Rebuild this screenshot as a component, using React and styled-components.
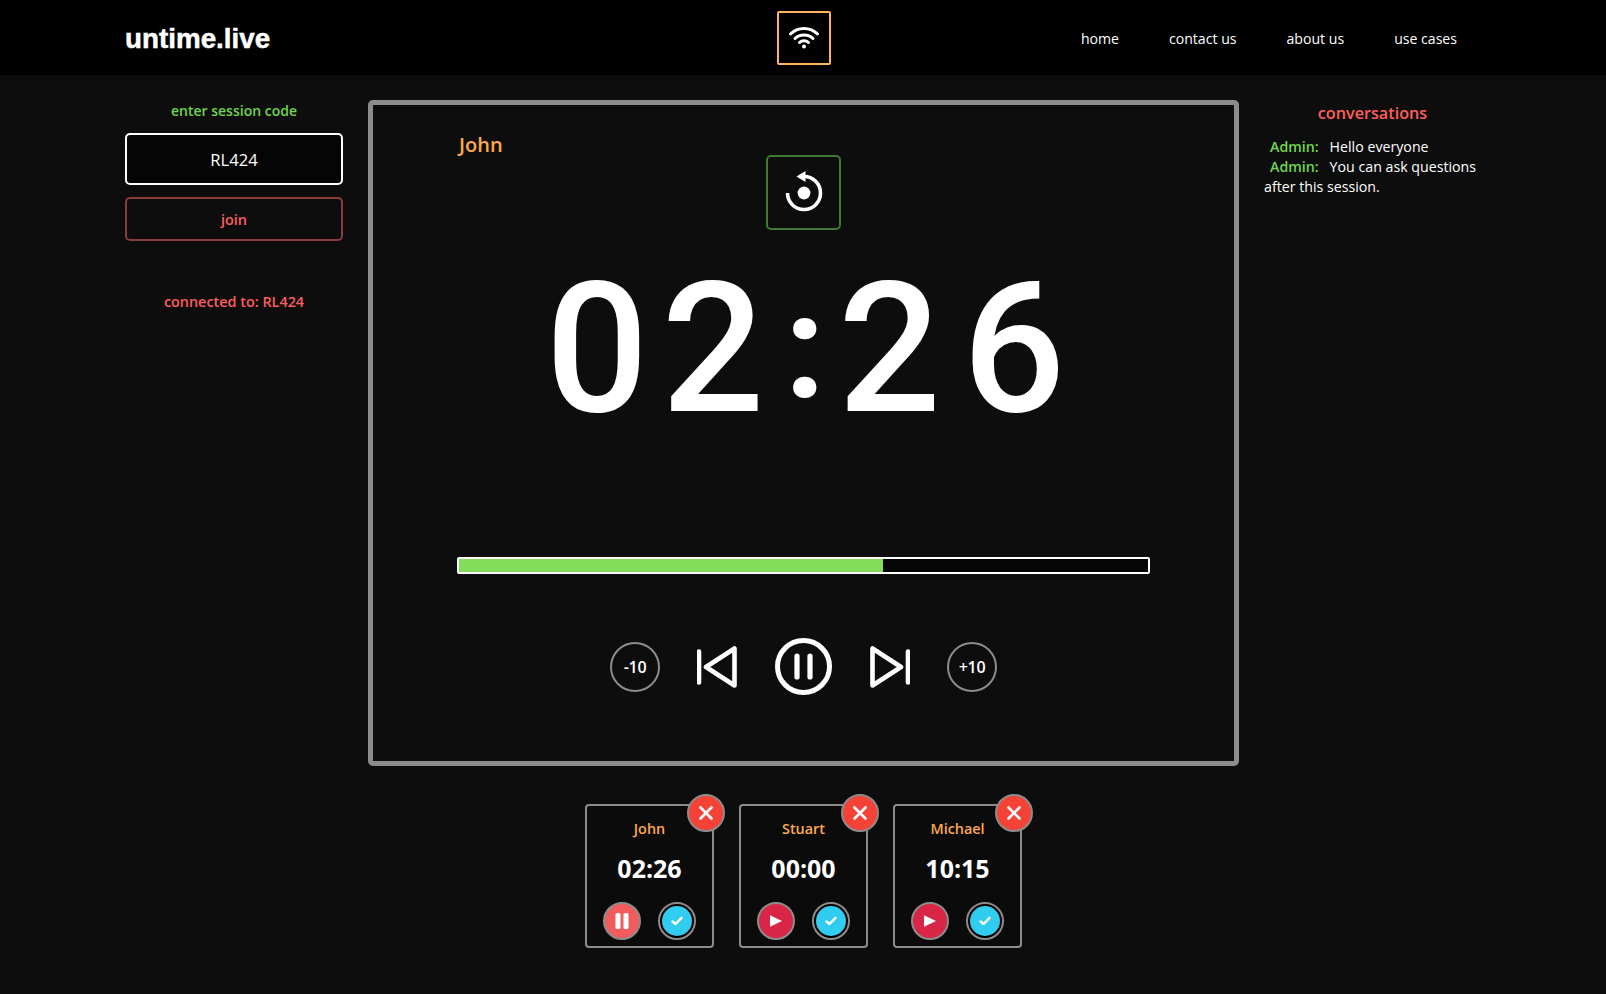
import styled, { createGlobalStyle } from "styled-components";

const COLORS = {
  page: "#0d0d0d",
  white: "#ffffff",
  gray: "#8c8c8c",
  green: "#6fd64b",
  bar: "#83dc5a",
  red: "#ff5d5d",
  orange: "#ffa94d",
};

const UI_FONT = `"Open Sans", "Noto Sans", sans-serif`;

const GlobalStyle = createGlobalStyle`
  * {
    box-sizing: border-box;
  }

  body {
    margin: 0;
    background-color: ${COLORS.page};
    color: ${COLORS.white};
    font-family: ${UI_FONT};
  }
`;

const speakers = [
  { name: "John", time: "02:26", running: true },
  { name: "Stuart", time: "00:00", running: false },
  { name: "Michael", time: "10:15", running: false },
];

const WifiIcon = () => (
  <svg width="30" height="23" viewBox="0 0 30 23" fill="none" stroke="#fff" strokeWidth="3" strokeLinecap="round">
    <path d="M1.5 8C8.5 .5 21.5 .5 28.5 8" />
    <path d="M6 12.5C10.5 7.8 19.5 7.8 24 12.5" />
    <path d="M10.5 16.5C12.8 14.3 17.2 14.3 19.5 16.5" />
    <circle cx="15" cy="20.5" r="2" fill="#fff" stroke="none" />
  </svg>
);

const RestartIcon = () => (
  <svg width="44" height="44" viewBox="0 0 44 44" fill="none">
    <path d="M5.5 22A16.5 16.5 0 1 0 22 5.5" stroke="#fff" strokeWidth="3.6" />
    <path d="M23.5 0V11L14.5 5.5Z" fill="#fff" />
    <circle cx="22" cy="22" r="6.4" fill="#fff" />
  </svg>
);

const PrevIcon = () => (
  <svg width="41" height="42" viewBox="0 0 41 42" fill="none" stroke="#fff" strokeWidth="4.6" strokeLinejoin="round" strokeLinecap="round">
    <path d="M2 5.5V36.5" />
    <path d="M37.5 2.5V39.5L9 21Z" />
  </svg>
);

const NextIcon = () => (
  <svg width="41" height="42" viewBox="0 0 41 42" fill="none" stroke="#fff" strokeWidth="4.6" strokeLinejoin="round" strokeLinecap="round">
    <path d="M39 5.5V36.5" />
    <path d="M3.5 2.5V39.5L32 21Z" />
  </svg>
);

const PauseIcon = () => (
  <svg width="57" height="57" viewBox="0 0 57 57" fill="none" stroke="#fff">
    <circle cx="28.5" cy="28.5" r="26" strokeWidth="5" />
    <path d="M22 18V39M35 18V39" strokeWidth="5.2" strokeLinecap="round" />
  </svg>
);

const SmallPause = () => (
  <svg width="18" height="18" viewBox="0 0 18 18" fill="#fff">
    <rect x="2.5" y="1" width="5" height="16" rx="1.6" />
    <rect x="10.5" y="1" width="5" height="16" rx="1.6" />
  </svg>
);

const SmallPlay = () => (
  <svg width="14" height="14" viewBox="0 0 14 14" fill="#fff">
    <path d="M1 1.2V12.8L13 7Z" />
  </svg>
);

const CloseIcon = () => (
  <svg width="14" height="14" viewBox="0 0 14 14" stroke="#fff" strokeWidth="2.6" strokeLinecap="round">
    <path d="M1.5 1.5L12.5 12.5M12.5 1.5L1.5 12.5" />
  </svg>
);

const CheckIcon = () => (
  <svg width="12" height="10" viewBox="0 0 12 10" fill="none" stroke="#fff" strokeWidth="2.4" strokeLinecap="round" strokeLinejoin="round">
    <path d="M1.5 5.5L4.5 8L10.5 1.8" />
  </svg>
);

function App() {
  return (
    <>
      <GlobalStyle />
      <Header>
        <Logo>untime.live</Logo>
        <WifiButton>
          <WifiIcon />
        </WifiButton>
        <Nav>
          <NavLink>home</NavLink>
          <NavLink>contact us</NavLink>
          <NavLink>about us</NavLink>
          <NavLink>use cases</NavLink>
        </Nav>
      </Header>

      <Layout>
        <SessionColumn>
          <SessionLabel>enter session code</SessionLabel>
          <CodeInput defaultValue="RL424" />
          <JoinButton>join</JoinButton>
          <ConnectedText>connected to: RL424</ConnectedText>
        </SessionColumn>

        <Center>
          <TimerPanel>
            <SpeakerName>John</SpeakerName>
            <ResetButton>
              <RestartIcon />
            </ResetButton>
            <Timer>
              <TimerDigit $width={114}>0</TimerDigit>
              <TimerDigit $width={118}>2</TimerDigit>
              <TimerColon>:</TimerColon>
              <TimerDigit $width={94}>2</TimerDigit>
              <TimerDigit $width={164}>6</TimerDigit>
            </Timer>
            <Progress>
              <ProgressFill style={{ width: "61.5%" }} />
            </Progress>
            <Controls>
              <SkipButton>-10</SkipButton>
              <IconButton>
                <PrevIcon />
              </IconButton>
              <IconButton>
                <PauseIcon />
              </IconButton>
              <IconButton>
                <NextIcon />
              </IconButton>
              <SkipButton>+10</SkipButton>
            </Controls>
          </TimerPanel>

          <CardRow>
            {speakers.map((speaker) => (
              <Card key={speaker.name}>
                <RemoveButton>
                  <CloseIcon />
                </RemoveButton>
                <CardName>{speaker.name}</CardName>
                <CardTime>{speaker.time}</CardTime>
                <CardActions>
                  <RoundButton $color={speaker.running ? "#f25c5c" : "#d92546"}>
                    {speaker.running ? <SmallPause /> : <SmallPlay />}
                  </RoundButton>
                  <DoneButton>
                    <DoneInner>
                      <CheckIcon />
                    </DoneInner>
                  </DoneButton>
                </CardActions>
              </Card>
            ))}
          </CardRow>
        </Center>

        <ChatColumn>
          <ChatTitle>conversations</ChatTitle>
          <ChatMessage>
            <ChatAuthor>Admin:</ChatAuthor>Hello everyone
          </ChatMessage>
          <ChatMessage>
            <ChatAuthor>Admin:</ChatAuthor>You can ask questions after this session.
          </ChatMessage>
        </ChatColumn>
      </Layout>
    </>
  );
}

const Header = styled.header`
  display: grid;
  grid-template-columns: 1fr auto 1fr;
  align-items: center;
  height: 75px;
  padding: 0 123px 0 125px;
  background-color: #000;
`;

const Logo = styled.div`
  padding-top: 2px;
  font-family: "Liberation Sans", Arial, sans-serif;
  font-size: 27.8px;
  font-weight: 700;
  -webkit-text-stroke: 0.5px #fff;
`;

const WifiButton = styled.div`
  display: flex;
  align-items: center;
  justify-content: center;
  width: 54px;
  height: 54px;
  border: 2px solid #ffb35c;
  border-radius: 2px;
`;

const Nav = styled.nav`
  display: flex;
  justify-content: flex-end;
  gap: 50px;
  padding: 2px 26px 0 0;
`;

const NavLink = styled.a`
  font-size: 14.1px;
`;

const Layout = styled.main`
  display: grid;
  grid-template-columns: 218px 871px 1fr;
  column-gap: 25px;
  padding: 25px 125px 0;
`;

const SessionColumn = styled.section`
  display: flex;
  flex-direction: column;
  align-items: stretch;
  text-align: center;
`;

const SessionLabel = styled.div`
  margin-bottom: 12px;
  color: ${COLORS.green};
  font-size: 14px;
  font-weight: 600;
  line-height: 21px;
`;

const CodeInput = styled.input`
  width: 100%;
  height: 52px;
  margin-bottom: 12px;
  border: 2px solid ${COLORS.white};
  border-radius: 5px;
  background-color: #050505;
  color: ${COLORS.white};
  font-family: ${UI_FONT};
  font-size: 16.6px;
  text-align: center;
  outline: none;
`;

const JoinButton = styled.button`
  height: 44px;
  border: 2px solid #8a3d3d;
  border-radius: 5px;
  background: transparent;
  color: ${COLORS.red};
  font-family: ${UI_FONT};
  font-size: 14.4px;
  font-weight: 600;
`;

const ConnectedText = styled.div`
  margin-top: 50px;
  color: ${COLORS.red};
  font-size: 14.4px;
  font-weight: 600;
  line-height: 21px;
`;

const Center = styled.section`
  display: flex;
  flex-direction: column;
  align-items: center;
`;

const TimerPanel = styled.div`
  display: flex;
  flex-direction: column;
  width: 100%;
  height: 666px;
  padding-top: 29px;
  border: 5px solid ${COLORS.gray};
  border-radius: 5px;
`;

const SpeakerName = styled.div`
  height: 21px;
  padding-left: 86px;
  color: ${COLORS.orange};
  font-size: 20px;
  font-weight: 600;
  line-height: 21px;
`;

const ResetButton = styled.div`
  display: flex;
  align-items: center;
  justify-content: center;
  align-self: center;
  width: 75px;
  height: 75px;
  border: 2px solid #3f7a33;
  border-radius: 5px;
`;

const Timer = styled.div`
  height: 160px;
  margin-top: 37px;
  padding-left: 29px;
  font-family: Roboto, sans-serif;
  font-size: 181px;
  font-weight: 500;
  line-height: 160px;
  text-align: center;
  white-space: nowrap;
`;

const TimerDigit = styled.span`
  display: inline-block;
  width: ${(props) => props.$width}px;
  text-align: center;
`;

const TimerColon = styled.span`
  display: inline-block;
  width: 66px;
  font-size: 145px;
  font-weight: 700;
  text-align: center;
  vertical-align: 14px;
`;

const Progress = styled.div`
  align-self: center;
  width: 693px;
  height: 17px;
  margin-top: 130px;
  border: 2px solid ${COLORS.white};
  border-radius: 2px;
  background-color: #050505;
`;

const ProgressFill = styled.div`
  height: 100%;
  background-color: ${COLORS.bar};
`;

const Controls = styled.div`
  display: flex;
  align-items: center;
  justify-content: center;
  gap: 37px;
  margin-top: 64px;
`;

const IconButton = styled.div`
  display: flex;
`;

const SkipButton = styled.div`
  display: flex;
  align-items: center;
  justify-content: center;
  width: 50px;
  height: 50px;
  border: 2px solid ${COLORS.gray};
  border-radius: 50%;
  font-size: 16px;
  font-weight: 600;
  letter-spacing: -0.3px;
`;

const CardRow = styled.div`
  display: flex;
  gap: 25px;
  margin-top: 38px;
`;

const Card = styled.article`
  position: relative;
  display: flex;
  flex-direction: column;
  align-items: center;
  width: 129px;
  height: 144px;
  padding-top: 13px;
  border: 2px solid ${COLORS.gray};
  border-radius: 4px;
  background-color: #0b0b0b;
`;

const RemoveButton = styled.div`
  position: absolute;
  top: -12px;
  right: -13px;
  display: flex;
  align-items: center;
  justify-content: center;
  width: 38px;
  height: 38px;
  border: 2px solid ${COLORS.gray};
  border-radius: 50%;
  background-color: #f44336;
`;

const CardName = styled.div`
  color: ${COLORS.orange};
  font-size: 14.4px;
  font-weight: 600;
  line-height: 20px;
`;

const CardTime = styled.div`
  margin-top: 11px;
  font-size: 25px;
  font-weight: 700;
  line-height: 36px;
`;

const CardActions = styled.div`
  display: flex;
  gap: 17px;
  margin-top: 16px;
`;

const RoundButton = styled.div`
  display: flex;
  align-items: center;
  justify-content: center;
  width: 38px;
  height: 38px;
  border: 2px solid ${COLORS.gray};
  border-radius: 50%;
  background-color: ${(props) => props.$color};
`;

const DoneButton = styled.div`
  display: flex;
  align-items: center;
  justify-content: center;
  width: 38px;
  height: 38px;
  border: 2px solid ${COLORS.gray};
  border-radius: 50%;
  background-color: #000;
`;

const DoneInner = styled.div`
  display: flex;
  align-items: center;
  justify-content: center;
  width: 30px;
  height: 30px;
  border-radius: 50%;
  background-color: #30cdf0;
`;

const ChatColumn = styled.aside`
  font-size: 14.2px;
  line-height: 20px;
`;

const ChatTitle = styled.div`
  margin: 1px 0 12px;
  color: ${COLORS.red};
  font-size: 16.2px;
  font-weight: 600;
  line-height: 24px;
  text-align: center;
`;

const ChatMessage = styled.div`
  text-indent: 6px;
`;

const ChatAuthor = styled.span`
  margin-right: 11px;
  color: ${COLORS.green};
  font-weight: 600;
`;

export default App;
